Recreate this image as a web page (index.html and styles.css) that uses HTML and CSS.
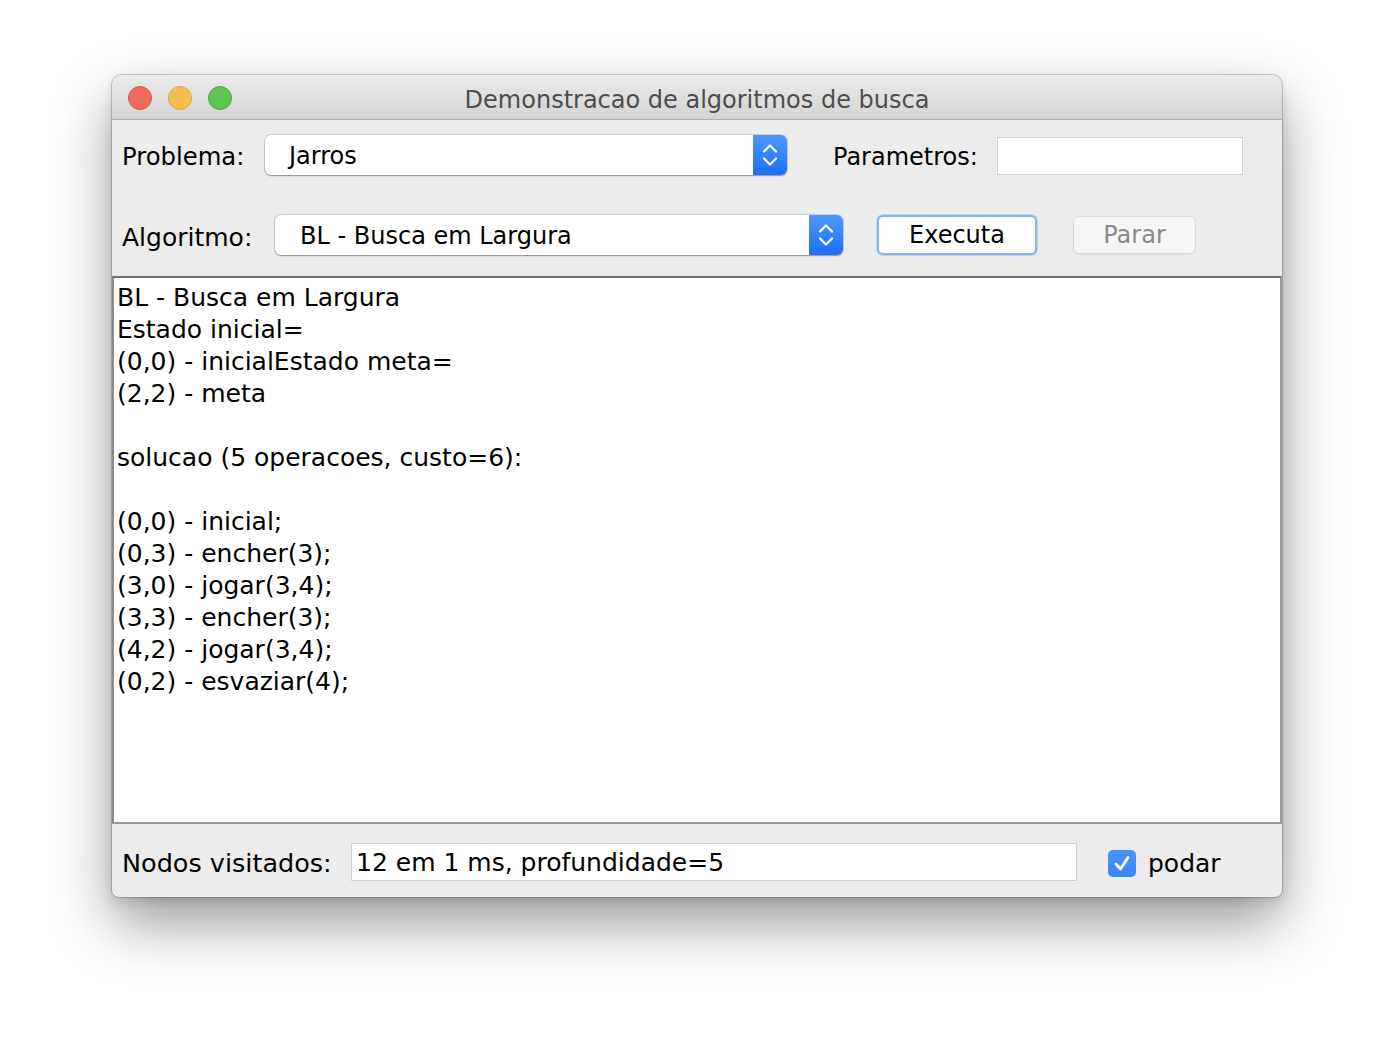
FILE: index.html
```html
<!DOCTYPE html>
<html lang="pt">
<head>
<meta charset="utf-8">
<title>Demonstracao de algoritmos de busca</title>
<link rel="stylesheet" href="styles.css">
</head>
<body>
<div class="window">
  <div class="titlebar">
    <div class="lights">
      <span class="light red"></span>
      <span class="light yellow"></span>
      <span class="light green"></span>
    </div>
    <div class="title">Demonstracao de algoritmos de busca</div>
  </div>

  <div class="toppanel">
    <div class="row row1">
      <span class="label lbl-problema">Problema:</span>
      <div class="combo combo-problema">
        <span class="combo-text">Jarros</span>
        <span class="combo-arrow">
          <svg width="34" height="40" viewBox="0 0 34 40"><path d="M11 16.5 L17 10.5 L23 16.5" fill="none" stroke="#fff" stroke-width="2.2" stroke-linecap="round" stroke-linejoin="round"/><path d="M11 23.5 L17 29.5 L23 23.5" fill="none" stroke="#fff" stroke-width="2.2" stroke-linecap="round" stroke-linejoin="round"/></svg>
        </span>
      </div>
      <span class="label lbl-param">Parametros:</span>
      <div class="field field-param"></div>
    </div>
    <div class="row row2">
      <span class="label lbl-alg">Algoritmo:</span>
      <div class="combo combo-alg">
        <span class="combo-text">BL - Busca em Largura</span>
        <span class="combo-arrow">
          <svg width="34" height="40" viewBox="0 0 34 40"><path d="M11 16.5 L17 10.5 L23 16.5" fill="none" stroke="#fff" stroke-width="2.2" stroke-linecap="round" stroke-linejoin="round"/><path d="M11 23.5 L17 29.5 L23 23.5" fill="none" stroke="#fff" stroke-width="2.2" stroke-linecap="round" stroke-linejoin="round"/></svg>
        </span>
      </div>
      <button class="btn btn-exec">Executa</button>
      <button class="btn btn-stop" disabled>Parar</button>
    </div>
  </div>

  <div class="output">
<div class="line">BL - Busca em Largura</div>
<div class="line">Estado inicial=</div>
<div class="line">(0,0) - inicialEstado meta=</div>
<div class="line">(2,2) - meta</div>
<div class="line">&nbsp;</div>
<div class="line">solucao (5 operacoes, custo=6):</div>
<div class="line">&nbsp;</div>
<div class="line">(0,0) - inicial;</div>
<div class="line">(0,3) - encher(3);</div>
<div class="line">(3,0) - jogar(3,4);</div>
<div class="line">(3,3) - encher(3);</div>
<div class="line">(4,2) - jogar(3,4);</div>
<div class="line">(0,2) - esvaziar(4);</div>
  </div>

  <div class="bottompanel">
    <span class="label lbl-nodos">Nodos visitados:</span>
    <div class="field field-nodos">12 em 1 ms, profundidade=5</div>
    <label class="check">
      <span class="checkbox">
        <svg width="28" height="27" viewBox="0 0 28 27"><path d="M8 14 L12.5 19 L20 7.5" fill="none" stroke="#fff" stroke-width="2.8" stroke-linecap="round" stroke-linejoin="round"/></svg>
      </span>
      <span class="check-label">podar</span>
    </label>
  </div>
</div>
</body>
</html>
```

FILE: styles.css
```css
html, body {
  margin: 0;
  padding: 0;
  background: #ffffff;
}

body {
  width: 1394px;
  height: 1046px;
  overflow: hidden;
  font-family: "DejaVu Sans", "Liberation Sans", sans-serif;
  color: #000;
}

.window {
  margin: 75px 0 0 112px;
  width: 1170px;
  height: 822px;
  display: flex;
  flex-direction: column;
  background: #ececec;
  border-radius: 10px 10px 7px 7px;
  box-shadow: 0 0 0 1px rgba(0,0,0,0.18), 0 26px 58px rgba(0,0,0,0.4), 0 4px 12px rgba(0,0,0,0.12);
  overflow: hidden;
}

.titlebar {
  height: 44px;
  flex: none;
  position: relative;
  display: flex;
  align-items: center;
  justify-content: center;
  background: linear-gradient(#ebebeb, #d4d4d4);
  border-bottom: 1px solid #b3b3b3;
}

.lights {
  position: absolute;
  left: 16px;
  top: 11px;
  display: flex;
  gap: 16px;
}

.light {
  width: 22px;
  height: 22px;
  border-radius: 50%;
  display: block;
}
.red { background: #ee6a5f; border: 1px solid #d8544b; }
.yellow { background: #f6be50; border: 1px solid #dba441; }
.green { background: #61c554; border: 1px solid #52a943; }

.title {
  font-size: 24px;
  color: #4d4d4d;
  padding-top: 5px;
}

.toppanel {
  flex: none;
  height: 156px;
  box-sizing: border-box;
  padding: 15px 0 0 10px;
  display: flex;
  flex-direction: column;
  gap: 40px;
}

.row {
  display: flex;
  align-items: center;
  height: 40px;
}

.label {
  font-size: 24px;
  white-space: nowrap;
  flex: none;
}

.lbl-problema { width: 143px; padding-top: 3px; font-size: 24.3px; }
.lbl-param { margin-left: 46px; width: 164px; padding-top: 3px; }
.lbl-alg { width: 153px; padding-top: 5px; font-size: 25px; }

.combo {
  flex: none;
  height: 40px;
  display: flex;
  align-items: center;
  background: #fff;
  border-radius: 6px;
  box-shadow: 0 0 0 1px rgba(0,0,0,0.12), 0 1px 1.5px rgba(0,0,0,0.3);
  box-sizing: border-box;
  overflow: hidden;
}
.combo-problema { width: 522px; }
.combo-alg { width: 568px; }

.combo-text {
  flex: 1;
  font-size: 24px;
  padding-left: 24px;
  padding-top: 1px;
  white-space: nowrap;
}
.combo-alg .combo-text { padding-left: 25px; }

.combo-arrow {
  width: 34px;
  height: 40px;
  flex: none;
  display: block;
  background: linear-gradient(#4f98fb, #1a6ffb);
}
.combo-arrow svg { display: block; }

.field {
  flex: none;
  background: #fff;
  border: 1px solid #cfcfcf;
  box-sizing: border-box;
}
.field-param { width: 246px; height: 38px; margin-top: 2px; }

.btn {
  flex: none;
  font-family: "DejaVu Sans", "Liberation Sans", sans-serif;
  font-size: 24px;
  height: 40px;
  box-sizing: border-box;
  border-radius: 6px;
  padding: 0;
}
.btn-exec {
  margin-left: 34px;
  width: 160px;
  background: #fff;
  color: #000;
  border: 2px solid #86b6ef;
  box-shadow: 0 0 0 1px rgba(140,185,240,0.45);
}
.btn-stop {
  margin-left: 36px;
  width: 123px;
  height: 38px;
  background: #f6f6f6;
  color: #8a8a8a;
  border: 1px solid #d9d9d9;
  box-shadow: 0 1px 1px rgba(0,0,0,0.05);
}

.output {
  flex: none;
  height: 548px;
  box-sizing: border-box;
  background: #fff;
  border-top: 2px solid #6f6f6f;
  border-left: 2px solid #8a8a8a;
  border-right: 2px solid #9a9a9a;
  border-bottom: 2px solid #9b9b9b;
  padding: 4px 0 0 3px;
  font-size: 25px;
  line-height: 32px;
}
.line { white-space: pre; }

.bottompanel {
  flex: 1;
  display: flex;
  align-items: flex-start;
  padding: 19px 0 0 10px;
}
.lbl-nodos { width: 229px; padding-top: 5px; font-size: 25.5px; }

.field-nodos {
  width: 726px;
  height: 38px;
  font-size: 25px;
  line-height: 38px;
  padding-left: 4px;
  white-space: nowrap;
}

.check {
  margin-left: 31px;
  margin-top: 6px;
  display: flex;
  align-items: center;
  gap: 12px;
}
.checkbox {
  width: 28px;
  height: 27px;
  border-radius: 5px;
  background: linear-gradient(#4a93f8, #3a84f5);
  display: block;
}
.checkbox svg { display: block; }
.check-label { font-size: 25px; }
```
